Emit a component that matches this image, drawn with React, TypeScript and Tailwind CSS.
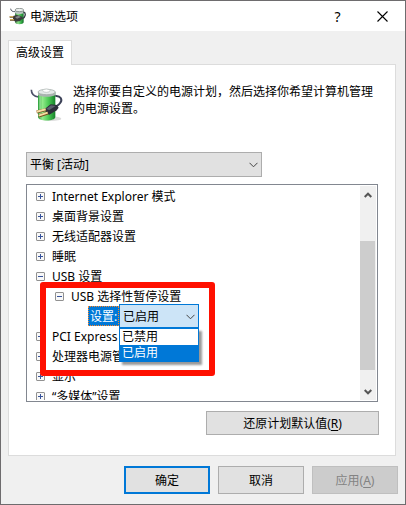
import { useState } from "react";

const DEFAULT_SETTING = "已启用";
const SETTING_OPTIONS = ["已禁用", "已启用"];

function TitleIcon({ className }: { className: string }) {
  return (
    <svg viewBox="24 20 51 51" className={className} aria-hidden="true">
      <defs>
        <linearGradient id="battery-small" x1="0" x2="1" y1="0" y2="0">
          <stop offset="0" stopColor="#3c7a45" />
          <stop offset="0.35" stopColor="#8fe08a" />
          <stop offset="0.7" stopColor="#38b048" />
          <stop offset="1" stopColor="#14692a" />
        </linearGradient>
      </defs>
      <path d="M29 22 C30 29 34 31 42 31" fill="none" stroke="#555a66" strokeWidth="3" />
      <path d="M42 27 V63 C42 71 68 71 68 63 V27 Z" fill="url(#battery-small)" />
      <path d="M42 26 V35 C47 39 63 39 68 35 V26 Z" fill="#b9c4c0" />
      <ellipse cx="55" cy="26" rx="13" ry="5" fill="#eef2f0" stroke="#66706c" strokeWidth="2" />
      <path d="M67 32 C76 34 74 48 64 52" fill="none" stroke="#3a3e48" strokeWidth="4" />
      <path d="M36 44 L47 41 L60 44 L66 51 L57 59 L43 61 L36 55 Z" fill="#3a3a3a" />
      <path d="M42 47 L53 43 L60 47 L48 52 Z" fill="#858588" />
      <path d="M26 47 H38 M27 56 H40" stroke="#5b4525" strokeWidth="5" />
      <path d="M26 46 H37 M27 55 H39" stroke="#dcb35c" strokeWidth="3" />
    </svg>
  );
}

function PowerIcon({ className }: { className: string }) {
  return (
    <svg viewBox="30 22 108 108" className={className} aria-hidden="true">
      <defs>
        <linearGradient id="battery-large" x1="0" x2="1" y1="0" y2="0">
          <stop offset="0" stopColor="#2c9f3c" />
          <stop offset="0.25" stopColor="#93ea8b" />
          <stop offset="0.6" stopColor="#4ccb55" />
          <stop offset="1" stopColor="#16822a" />
        </linearGradient>
      </defs>
      <ellipse cx="92" cy="117" rx="32" ry="7" fill="#000" opacity="0.14" />
      <path d="M34 30 C34 44 42 50 56 52" fill="none" stroke="#4b5068" strokeWidth="5" />
      <path d="M54 38 V112 C54 126 106 126 106 112 V38 Z" fill="url(#battery-large)" />
      <path d="M60 44 V114" stroke="#d4ffd0" strokeWidth="3" opacity="0.6" />
      <path d="M54 38 V46 C62 53 98 53 106 46 V38 Z" fill="#a9b4b0" />
      <ellipse cx="80" cy="37" rx="26" ry="8" fill="#e3e9e7" stroke="#98a39f" strokeWidth="2" />
      <ellipse cx="79" cy="33" rx="11" ry="5" fill="#fff" stroke="#b2bab7" strokeWidth="2" />
      <path d="M106 49 C122 47 128 60 121 69 C116 77 110 78 104 84" fill="none" stroke="#3d4258" strokeWidth="6" />
      <path d="M74 88 L92 74 L110 76 L116 84 L110 92 L88 105 L78 101 Z" fill="#2d2e3a" />
      <path d="M78 88 L93 77 L107 79 L88 91 Z" fill="#5c606f" />
      <path d="M78 90 L50 97 M84 100 L56 109" stroke="#7a5020" strokeWidth="9" />
      <path d="M77 89 L50 96 M83 99 L56 108" stroke="#f6deA4" strokeWidth="6" />
    </svg>
  );
}

function Chevron({ className }: { className: string }) {
  return (
    <svg viewBox="0 0 9 6" className={className} fill="none" stroke="currentColor" aria-hidden="true">
      <path d="M0.5 0.8 L4.5 4.8 L8.5 0.8" />
    </svg>
  );
}

function Expander({ open, label }: { open: boolean; label: string }) {
  return (
    <button
      type="button"
      aria-label={label}
      aria-expanded={open}
      className="h-[9px] w-[9px] shrink-0 rounded-[1px] border border-[#919191] bg-[#f8f8f8]"
    >
      <svg viewBox="0 0 7 7" className="block h-[7px] w-[7px]" stroke="#39549b" aria-hidden="true">
        <path d={open ? "M1 3.5 H6" : "M1 3.5 H6 M3.5 1 V6"} />
      </svg>
    </button>
  );
}

function Row({ label, open = false, nested = false }: { label: string; open?: boolean; nested?: boolean }) {
  return (
    <div className={`flex h-5 shrink-0 items-center gap-[7px] whitespace-nowrap ${nested ? "pl-7" : "pl-[9px]"}`}>
      <Expander open={open} label={label} />
      <span>{label}</span>
    </div>
  );
}

function SettingRow() {
  const [value, setValue] = useState(DEFAULT_SETTING);
  return (
    <div className="flex h-5 shrink-0 items-center pl-[61px]">
      <label
        htmlFor="usb-suspend"
        className="flex h-5 w-[31px] items-center justify-center border border-dotted border-[#ff8728] bg-[#0078d7] text-white"
      >
        设置:
      </label>
      <div className="relative z-10 h-6 w-20">
        <select
          id="usb-suspend"
          value={value}
          onChange={(e) => setValue(e.target.value)}
          className="h-6 w-full appearance-none border border-[#0078d7] bg-[#cce4f7] pl-[3px] outline-none"
        >
          {SETTING_OPTIONS.map((o) => (
            <option key={o}>{o}</option>
          ))}
        </select>
        <Chevron className="pointer-events-none absolute right-1 top-[10px] h-[6px] w-[9px] text-[#444]" />
        <ul
          role="listbox"
          aria-label="设置"
          className="absolute left-0 top-full w-full border border-[#0078d7] bg-white shadow-[3px_3px_2px_rgba(0,0,0,0.4)]"
        >
          {SETTING_OPTIONS.map((o) => (
            <li
              key={o}
              role="option"
              aria-selected={o === value}
              onClick={() => setValue(o)}
              className={`h-4 pl-[2px] leading-4 ${o === value ? "bg-[#0078d7] text-white" : ""}`}
            >
              {o}
            </li>
          ))}
        </ul>
      </div>
    </div>
  );
}

function ScrollBar() {
  return (
    <div className="flex w-4 shrink-0 flex-col bg-[#f0f0f0]">
      <button type="button" aria-label="向上滚动" className="flex h-[17px] items-center justify-center">
        <svg viewBox="0 0 8 6" className="h-[6px] w-2" fill="none" stroke="#555" strokeWidth="2" aria-hidden="true">
          <path d="M0.7 5 L4 1.7 L7.3 5" />
        </svg>
      </button>
      <div className="flex-[38]" />
      <div className="mr-px flex-[129] bg-[#cdcdcd]" />
      <div className="flex-[13]" />
      <button type="button" aria-label="向下滚动" className="flex h-[17px] items-center justify-center">
        <svg viewBox="0 0 8 6" className="h-[6px] w-2" fill="none" stroke="#555" strokeWidth="2" aria-hidden="true">
          <path d="M0.7 1 L4 4.3 L7.3 1" />
        </svg>
      </button>
    </div>
  );
}

export default function App() {
  return (
    <div className="flex h-screen w-full flex-col border border-[#6e6c6e] bg-[#f0f0f0] font-['Noto_Sans','Noto_Sans_CJK_SC',sans-serif] text-[12px] leading-[17px] text-black">
      <header className="flex h-[30px] shrink-0 items-center bg-white pl-2">
        <TitleIcon className="h-[17px] w-[17px]" />
        <h1 className="ml-1 flex-1">电源选项</h1>
        <button type="button" aria-label="帮助" className="h-full w-[45px] text-[14px]">
          ?
        </button>
        <button type="button" aria-label="关闭" className="flex h-full w-[45px] items-center justify-center">
          <svg viewBox="0 0 11 11" className="h-[11px] w-[11px]" stroke="#000" strokeWidth="1.1" aria-hidden="true">
            <path d="M0.5 0.5 L10.5 10.5 M10.5 0.5 L0.5 10.5" />
          </svg>
        </button>
      </header>

      <main className="flex min-h-0 flex-1 flex-col px-[7px] pb-[10px] pt-[9px]">
        <div role="tablist" className="flex">
          <button
            type="button"
            role="tab"
            aria-selected="true"
            className="z-10 -mb-px h-[25px] w-16 border border-b-0 border-[#dcdcdc] bg-white pb-[2px]"
          >
            高级设置
          </button>
        </div>

        <section className="mr-[2px] flex min-h-0 flex-1 flex-col border border-[#dcdcdc] bg-white pb-5 pl-[17px] pr-4 pt-[18px]">
          <div className="flex h-[69px] shrink-0 gap-[7px] pl-1">
            <PowerIcon className="mt-1 h-9 w-9 shrink-0" />
            <p>选择你要自定义的电源计划，然后选择你希望计算机管理的电源设置。</p>
          </div>

          <div className="relative w-[236px] shrink-0">
            <select
              aria-label="电源计划"
              className="h-[25px] w-full appearance-none border border-[#adadad] bg-[#e1e1e1] pl-[3px] outline-none"
            >
              <option>平衡 [活动]</option>
            </select>
            <Chevron className="pointer-events-none absolute right-1 top-[10px] h-[6px] w-[9px] text-[#444]" />
          </div>

          <div className="relative mr-px mt-[7px] flex min-h-0 flex-1 border border-[#828790] bg-white py-px pr-px">
            <div className="flex min-w-0 flex-1 flex-col overflow-hidden">
              <Row label="Internet Explorer 模式" />
              <Row label="桌面背景设置" />
              <Row label="无线适配器设置" />
              <Row label="睡眠" />
              <Row label="USB 设置" open />
              <Row label="USB 选择性暂停设置" open nested />
              <SettingRow />
              <Row label="PCI Express" />
              <Row label="处理器电源管理" />
              <Row label="显示" />
              <Row label="“多媒体”设置" />
            </div>
            <ScrollBar />
            <div className="pointer-events-none absolute left-[13px] top-[97px] z-20 h-[94px] w-[175px] rounded-[3px] border-6 border-[#ff1000]" />
          </div>

          <button
            type="button"
            className="mt-[9px] h-6 w-[173px] shrink-0 self-end border border-[#adadad] bg-[#e1e1e1]"
          >
            还原计划默认值(<u className="underline-offset-2">R</u>)
          </button>
        </section>

        <footer className="mt-[10px] flex shrink-0 justify-end gap-2">
          <button type="button" className="h-7 w-[86px] border-2 border-[#0078d7] bg-[#e1e1e1]">
            确定
          </button>
          <button type="button" className="h-7 w-[86px] border border-[#adadad] bg-[#e1e1e1]">
            取消
          </button>
          <button type="button" disabled className="h-7 w-[86px] border border-[#bfbfbf] bg-[#ccc] text-[#838383]">
            应用(<u className="underline-offset-2">A</u>)
          </button>
        </footer>
      </main>
    </div>
  );
}
